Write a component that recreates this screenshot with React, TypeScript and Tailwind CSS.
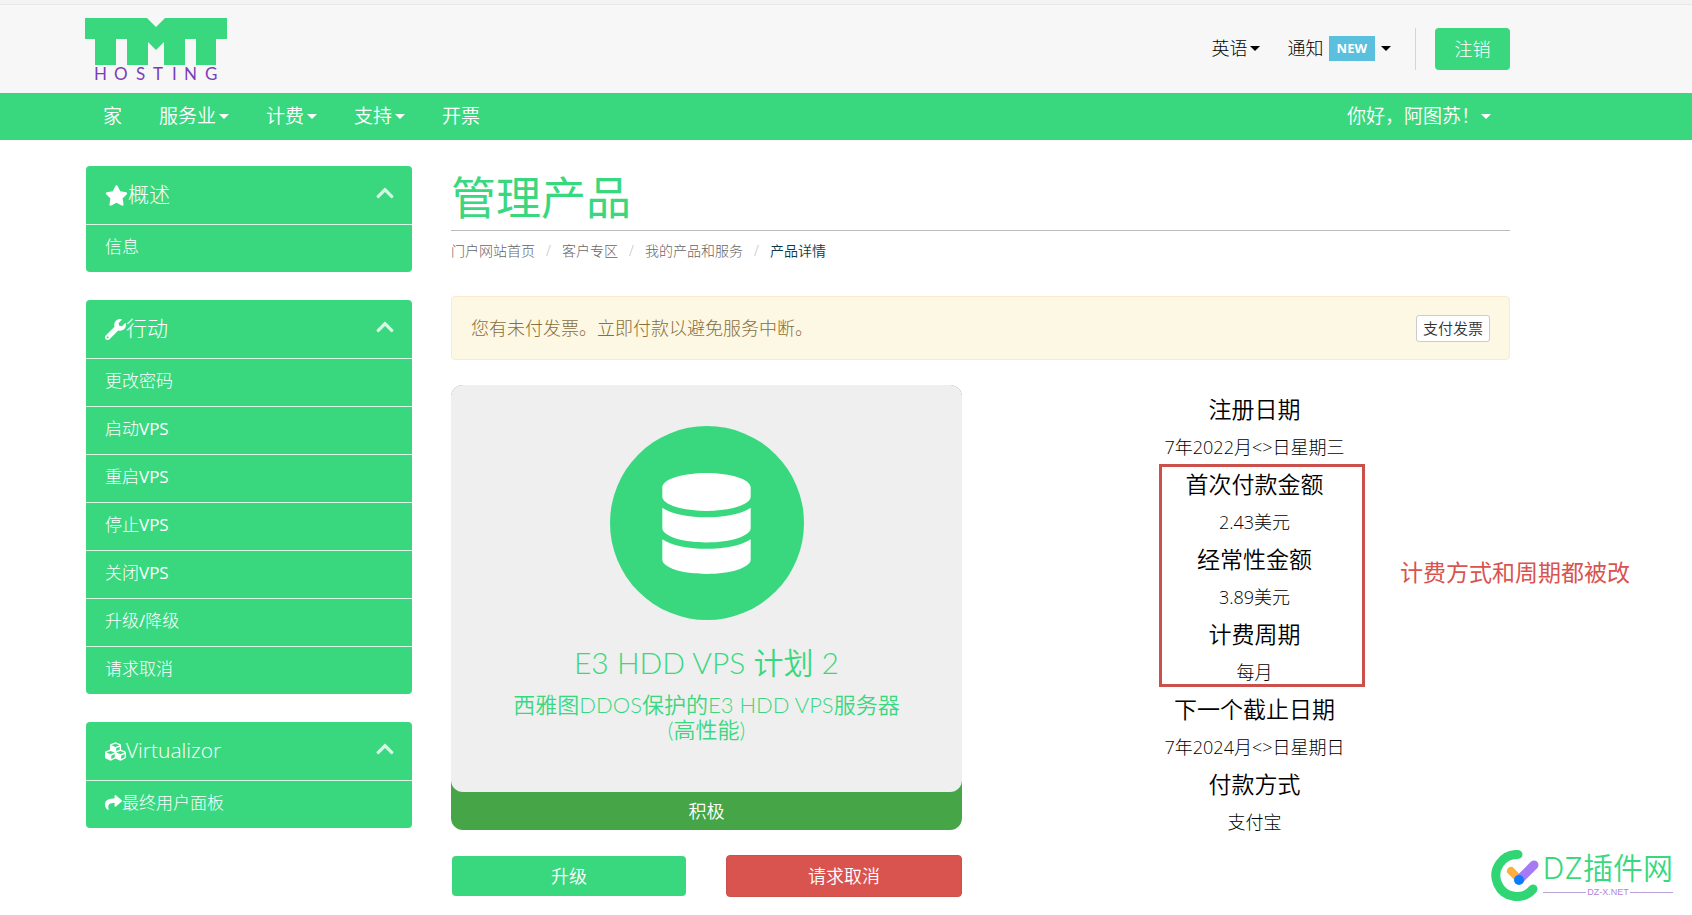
import type { ReactNode } from 'react'
import { FaChevronUp, FaCubes, FaDatabase, FaShare, FaStar, FaWrench } from 'react-icons/fa'

const shell = 'pl-[86px] pr-[182px]'

const navItems = [
  { label: '家', menu: false },
  { label: '服务业', menu: true },
  { label: '计费', menu: true },
  { label: '支持', menu: true },
  { label: '开票', menu: false },
]

const crumbs = ['门户网站首页', '客户专区', '我的产品和服务']

const actions = ['更改密码', '启动VPS', '重启VPS', '停止VPS', '关闭VPS', '升级/降级', '请求取消']

const details = [
  ['注册日期', '7年2022月<>日星期三'],
  ['首次付款金额', '2.43美元'],
  ['经常性金额', '3.89美元'],
  ['计费周期', '每月'],
  ['下一个截止日期', '7年2024月<>日星期日'],
  ['付款方式', '支付宝'],
]

function Caret() {
  return <span className="inline-block border-x-[5px] border-t-[5px] border-x-transparent border-t-current" />
}

function Logo() {
  return (
    <svg width="142" height="72" viewBox="0 0 142 72" role="img" aria-label="TMT Hosting">
      <path
        fill="#39d87f"
        d="M0 0H62L71 9L80 0H142V21H131V47H111V21H100V47H79V24L71 32L63 24V47H42V21H31V47H10V21H0Z"
      />
      <text x="9 29 51 68 87 99 120" y="62" fontSize="17" fill="#7a3fb8" className="font-[Lato]">
        HOSTING
      </text>
    </svg>
  )
}

function Panel({ icon, title, children }: { icon: ReactNode; title: string; children: ReactNode }) {
  return (
    <section className="rounded bg-[#39d87f] text-white">
      <h2 className="flex h-[58px] items-center justify-between pr-[17px] pl-[19px] text-[21px] font-light">
        <span className="flex items-center">
          {icon}
          {title}
        </span>
        <button type="button" aria-label="收起" className="pb-1 text-[20px] opacity-80">
          <FaChevronUp />
        </button>
      </h2>
      <ul className="font-['Open_Sans','Noto_Sans_CJK_SC_Light','Noto_Sans_CJK_SC',sans-serif] text-[17px]">
        {children}
      </ul>
    </section>
  )
}

function PanelLink({ children }: { children: ReactNode }) {
  return (
    <li className="border-t border-[#d9f8e6]">
      <a href="#" className="flex h-[47px] items-center px-[19px] pb-1">
        {children}
      </a>
    </li>
  )
}

function Watermark() {
  return (
    <div className="absolute top-[850px] right-[19px] flex items-start gap-1">
      <svg width="48" height="51" viewBox="0 0 48 51" fill="none" strokeLinecap="round">
        <path d="M27 4.5A21 21 0 1 0 42 39" stroke="#2fd673" strokeWidth="9" />
        <path d="M20 21L28 29" stroke="#fbb03b" strokeWidth="8" />
        <path d="M29 29L43 15" stroke="#a57bf5" strokeWidth="9" />
        <circle cx="28" cy="30" r="5" fill="#0a7cff" />
      </svg>
      <div className="pt-0.5">
        <p className="text-[30px] leading-8 font-[350] text-[#39d87f]">
          <span className="font-[Inter] font-light">DZ</span>插件网
        </p>
        <p className="mt-0.5 flex items-center gap-px text-[9px] leading-3 text-[#b583dc]">
          <span className="h-px flex-1 bg-[#b9a3d6]" />
          <span className="font-['Liberation_Sans']">DZ-X.NET</span>
          <span className="h-px flex-1 bg-[#b9a3d6]" />
        </p>
      </div>
    </div>
  )
}

export default function App() {
  return (
    <div className="relative min-h-screen overflow-x-clip bg-white pb-[18px] font-['Open_Sans','Noto_Sans_CJK_SC',sans-serif] text-[18px] text-black">
      <div className="h-[5px] border-b border-[#e8e8e8] bg-[#f3f3f3]" />
      <header className={`flex h-[88px] items-start justify-between bg-[#f7f7f7] ${shell}`}>
        <a href="#" className="-ml-px pt-[13px]">
          <Logo />
        </a>
        <div className="flex items-center pt-[23px] font-light">
          <button type="button" className="flex items-center gap-0.5 pb-0.5">
            英语 <Caret />
          </button>
          <button type="button" className="ml-7 flex items-center pb-0.5">
            通知
            <span className="mr-1.5 ml-[5px] bg-[#5bc0de] px-2 text-[13px] leading-[25px] font-bold text-white">
              NEW
            </span>
            <Caret />
          </button>
          <span className="mr-[19px] ml-6 h-[42px] w-px bg-[#d5d5d5]" />
          <button type="button" className="h-[42px] w-[75px] rounded bg-[#39d87f] text-white">
            注销
          </button>
        </div>
      </header>

      <nav className={`bg-[#39d87f] text-[19px] font-[350] text-white ${shell}`}>
        <div className="flex h-[47px] items-center justify-between pr-[19px] pl-[17px]">
          <ul className="flex gap-[37px]">
            {navItems.map((item) => (
              <li key={item.label}>
                <a href="#" className="flex items-center gap-[3px]">
                  {item.label}
                  {item.menu && <Caret />}
                </a>
              </li>
            ))}
          </ul>
          <a href="#" className="flex items-center gap-px">
            你好，阿图苏！
            <Caret />
          </a>
        </div>
      </nav>

      <div className={`grid grid-cols-[326px_1fr] items-start gap-x-[39px] pt-[26px] ${shell}`}>
        <aside className="flex flex-col gap-7">
          <Panel icon={<FaStar className="text-[23px]" />} title="概述">
            <PanelLink>信息</PanelLink>
          </Panel>
          <Panel icon={<FaWrench />} title="行动">
            {actions.map((label) => (
              <PanelLink key={label}>{label}</PanelLink>
            ))}
          </Panel>
          <Panel icon={<FaCubes />} title="Virtualizor">
            <PanelLink>
              <FaShare />
              最终用户面板
            </PanelLink>
          </Panel>
        </aside>

        <main>
          <h1 className="h-[65px] border-b border-[#bbb] text-[45px] leading-[64px] text-[#39d87f]">
            管理产品
          </h1>
          <ol className="flex h-[65px] text-[14px] leading-10 font-light text-[#666]">
            {crumbs.map((label) => (
              <li key={label} className="flex">
                <a href="#">{label}</a>
                <span className="w-[27px] text-center text-[#bbb]">/</span>
              </li>
            ))}
            <li className="font-[350] text-[#0a3a4a]">产品详情</li>
          </ol>

          <div className="flex h-16 items-center justify-between rounded border border-[#faebcc] bg-[#fcf8e3] px-[19px] font-light text-[#8a6d3b]">
            <p>您有未付发票。立即付款以避免服务中断。</p>
            <button
              type="button"
              className="rounded-[3px] border border-[#ccc] bg-white px-1.5 text-[15px] leading-[25px] font-[350] text-[#333]"
            >
              支付发票
            </button>
          </div>

          <div className="mt-[25px] grid grid-cols-2 gap-x-[37px]">
            <div>
              <div className="rounded-[12px] bg-[#46a546] text-center">
                <div className="flex flex-col items-center rounded-[12px] bg-[#efefef] pt-[41px] pb-[50px] text-[#39d87f]">
                  <div className="flex size-[194px] items-center justify-center rounded-full bg-[#39d87f] text-white">
                    <FaDatabase size={101} />
                  </div>
                  <h3 className="mt-[25px] font-['Lato','Noto_Sans_CJK_SC',sans-serif] text-[30px] leading-[34px] font-[350]">
                    E3 HDD VPS 计划 2
                  </h3>
                  <h4 className="mt-[13px] font-['Lato','Noto_Sans_CJK_SC',sans-serif] text-[22px] leading-[25px] font-[350]">
                    西雅图DDOS保护的E3 HDD VPS服务器
                    <br />
                    (高性能)
                  </h4>
                </div>
                <div className="h-[38px] leading-[38px] font-[350] text-white">积极</div>
              </div>
              <div className="mt-[25px] grid grid-cols-2 gap-x-[39px] font-[350] text-white">
                <button type="button" className="m-px h-10 rounded bg-[#39d87f]">
                  升级
                </button>
                <button type="button" className="h-[42px] rounded border border-[#c9504b] bg-[#d9534f]">
                  请求取消
                </button>
              </div>
            </div>

            <div className="relative pt-1.5 text-center">
              <dl className="mx-auto w-fit">
                {details.map(([term, value]) => (
                  <div key={term}>
                    <dt className="text-[23px] leading-[37px] font-[350]">{term}</dt>
                    <dd className="text-[18px] leading-[38px] font-light">{value}</dd>
                  </div>
                ))}
              </dl>
              {/* highlight around the billing rows */}
              <div className="absolute top-[79px] left-[160px] h-[223px] w-[206px] border-3 border-[#cb504b]" />
              <p className="absolute top-[169px] left-[401px] text-[23px] leading-9 whitespace-nowrap text-[#d9534f]">
                计费方式和周期都被改
              </p>
            </div>
          </div>
        </main>
      </div>
      <Watermark />
    </div>
  )
}
